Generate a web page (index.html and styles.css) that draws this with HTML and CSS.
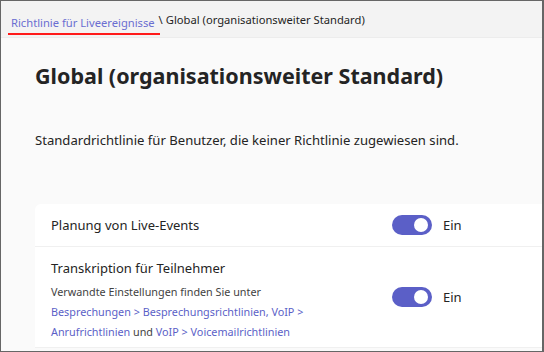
FILE: index.html
```html
<!DOCTYPE html>
<html lang="de">
<head>
    <meta charset="UTF-8">
    <title>Richtlinie für Liveereignisse</title>
    <link rel="stylesheet" href="styles.css">
</head>
<body>
    <div class="frame">
        <div class="crumbs">
            <a class="crumb-link" href="#">Richtlinie für Liveereignisse</a>
            <span class="crumb-sep">\</span>
            <span class="crumb-current">Global (organisationsweiter Standard)</span>
        </div>
        <div class="page">
            <h1 class="page-title">Global (organisationsweiter Standard)</h1>
            <p class="page-desc">Standardrichtlinie für Benutzer, die keiner Richtlinie zugewiesen sind.</p>

            <div class="settings-card">
                <div class="setting-row">
                    <div class="setting-text">
                        <div class="setting-name">Planung von Live-Events</div>
                    </div>
                    <div class="toggle-wrap">
                        <span class="toggle on"><span class="knob"></span></span>
                        <span class="toggle-label">Ein</span>
                    </div>
                </div>
                <div class="setting-row tall">
                    <div class="setting-text">
                        <div class="setting-name">Transkription für Teilnehmer</div>
                        <div class="setting-help">
                            Verwandte Einstellungen finden Sie unter<br>
                            <a href="#">Besprechungen &gt; Besprechungsrichtlinien, VoIP &gt;</a><br>
                            <a href="#">Anrufrichtlinien</a> und <a href="#">VoIP &gt; Voicemailrichtlinien</a>
                        </div>
                    </div>
                    <div class="toggle-wrap">
                        <span class="toggle on"><span class="knob"></span></span>
                        <span class="toggle-label">Ein</span>
                    </div>
                </div>
            </div>
        </div>
    </div>
</body>
</html>
```

FILE: styles.css
```css
html, body {
    margin: 0;
    padding: 0;
    height: 100%;
    overflow: hidden;
}

body {
    font-family: "Noto Sans", "Open Sans", sans-serif;
    color: #242424;
    background: #fafafa;
}

.frame {
    box-sizing: border-box;
    height: 352px;
    border: 1px solid #666666;
    border-right-width: 2px;
    background: #fafafa;
    overflow: hidden;
}

/* Breadcrumb bar */
.crumbs {
    height: 36px;
    padding-left: 10px;
    background: #f3f3f3;
    display: flex;
    align-items: center;
    gap: 3px;
    font-size: 11.2px;
    border-bottom: 1px solid #ececec;
}

.crumb-link {
    color: #6a6ed1;
    text-decoration: none;
    margin: 0 -4px -6px -3px;
    padding: 5px 5px 3px 3px;
    border-bottom: 2px solid #ff1a1a;
}

.crumb-sep,
.crumb-current {
    color: #242424;
}

/* Page header */
.page {
    padding-left: 34px;
}

.page-title {
    margin: 24px 0 0;
    font-size: 21.5px;
    font-weight: 700;
    line-height: 28px;
}

.page-desc {
    margin: 40px 0 0;
    font-size: 13.1px;
    line-height: 20px;
}

/* Settings card */
.settings-card {
    margin-top: 54px;
    background: #ffffff;
    border-radius: 6px 0 0 0;
    width: 600px;
}

.setting-row {
    display: flex;
    align-items: center;
    padding: 0 16px;
    border-bottom: 1px solid #f0f0f0;
    min-height: 42px;
}

.setting-row.tall {
    align-items: flex-start;
    padding-top: 11px;
    padding-bottom: 5px;
}

.setting-row.tall .toggle-wrap {
    margin-top: 29px;
}

.setting-text {
    width: 341px;
}

.setting-name {
    font-size: 13px;
    line-height: 20px;
}

.setting-help {
    margin-top: 4px;
    font-size: 10.8px;
    line-height: 20px;
    color: #424242;
}

.setting-help a {
    color: #5b5fc7;
    text-decoration: none;
}

/* Toggle switch */
.toggle-wrap {
    display: flex;
    align-items: center;
    gap: 11px;
}

.toggle {
    box-sizing: border-box;
    width: 40px;
    height: 20px;
    border-radius: 10px;
    background: #5b5fc7;
    display: flex;
    align-items: center;
    justify-content: flex-end;
    padding-right: 4px;
}

.knob {
    width: 14px;
    height: 14px;
    border-radius: 50%;
    background: #ffffff;
}

.toggle-label {
    font-size: 13px;
    line-height: 20px;
}
```
